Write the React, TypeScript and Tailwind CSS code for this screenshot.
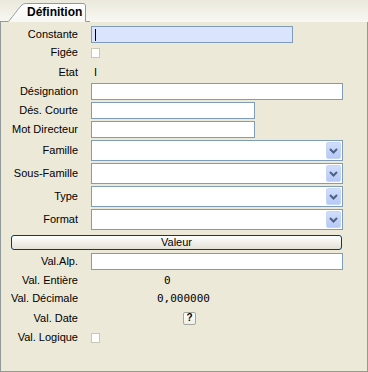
import React from "react"

const font = { fontFamily: '"Liberation Sans", Arial, sans-serif' }

function Label({ text }: { text: string }) {
  return <div className="w-[77px] shrink-0 text-right text-[11px] leading-none text-black">{text}</div>
}

function Row({ label, mt, h, children }: { label: string; mt: string; h: string; children?: React.ReactNode }) {
  return (
    <div className={`flex items-center ${mt} ${h}`}>
      <Label text={label} />
      <div className="ml-[13px] flex h-full items-center">{children}</div>
    </div>
  )
}

function TextBox({ w, focused, children }: { w: string; focused?: boolean; children?: React.ReactNode }) {
  return (
    <div
      className={`relative h-[17px] ${w} border border-[#7f9db9] ${focused ? "bg-[#dae4fc]" : "bg-white"}`}
    >
      {children}
    </div>
  )
}

function Combo() {
  return (
    <div className="flex h-[21px] w-[252px] items-stretch justify-end border border-[#7f9db9] bg-white p-[1px]">
      <div className="flex w-[15px] items-center justify-center rounded-[2px] border border-[#c7d5f7] bg-gradient-to-b from-[#d0defc] to-[#b6c9f7]">
        <svg width="9" height="6" viewBox="0 0 9 6">
          <polyline points="1,1 4.5,4.5 8,1" fill="none" stroke="#4d6185" strokeWidth="2" />
        </svg>
      </div>
    </div>
  )
}

function CheckBox() {
  return <div className="h-[10px] w-[9px] border border-[#c9c7ba] bg-white" />
}

export default function App() {
  return (
    <div className="h-[372px] w-[368px] bg-[#ece9d8]" style={font}>
      {/* bandeau des onglets */}
      <div className="relative z-10 -mb-px h-[22px] bg-gradient-to-b from-[#ebe9dc] to-[#f8f7f2]">
        <div className="relative h-[22px] w-[90px]">
          <svg className="absolute left-0 top-0" width="90" height="22" viewBox="0 0 90 22">
            <defs>
              <linearGradient id="tabg" x1="0" y1="0" x2="0" y2="1">
                <stop offset="0" stopColor="#ffffff" />
                <stop offset="1" stopColor="#f7f7f5" />
              </linearGradient>
            </defs>
            <path d="M8 22 L8.5 21.5 C14 15 18 9 21 6 C22.5 4.3 24 3.5 26.5 3.5 L83 3.5 C84.8 3.5 85.5 4.5 85.5 6 L85.5 22 Z" fill="url(#tabg)" />
            <path d="M0 21.5 L8.5 21.5 C14 15 18 9 21 6 C22.5 4.3 24 3.5 26.5 3.5 L83 3.5 C84.8 3.5 85.5 4.5 85.5 6 L85.5 21.5 L90 21.5" fill="none" stroke="#919b9c" />
          </svg>
          <span className="absolute left-[27px] top-[5px] text-[12px] font-bold leading-[14px] text-black">Définition</span>
        </div>
      </div>

      {/* panneau */}
      <div className="h-[351px] w-[368px] border border-[#919b9c] bg-[#ece9d8]">
        <div className="flex flex-col">
          <Row label="Constante" mt="mt-[4px]" h="h-[17px]">
            <TextBox w="w-[202px]" focused>
              <div className="absolute left-[3px] top-[2px] h-[12px] w-[1px] bg-black" />
            </TextBox>
          </Row>
          <Row label="Figée" mt="mt-[1px]" h="h-[17px]">
            <CheckBox />
          </Row>
          <Row label="Etat" mt="mt-[3px]" h="h-[17px]">
            <span className="ml-[3px] text-[11px] leading-none">I</span>
          </Row>
          <Row label="Désignation" mt="mt-[2px]" h="h-[17px]">
            <TextBox w="w-[252px]" />
          </Row>
          <Row label="Dés. Courte" mt="mt-[2px]" h="h-[17px]">
            <TextBox w="w-[164px]" />
          </Row>
          <Row label="Mot Directeur" mt="mt-[2px]" h="h-[17px]">
            <TextBox w="w-[164px]" />
          </Row>
          <Row label="Famille" mt="mt-[2px]" h="h-[21px]">
            <Combo />
          </Row>
          <Row label="Sous-Famille" mt="mt-[2px]" h="h-[21px]">
            <Combo />
          </Row>
          <Row label="Type" mt="mt-[2px]" h="h-[21px]">
            <Combo />
          </Row>
          <Row label="Format" mt="mt-[2px]" h="h-[21px]">
            <Combo />
          </Row>

          <button className="ml-[10px] mt-[5px] flex h-[15px] w-[331px] items-center justify-center rounded-[3px] border border-[#003c74] bg-gradient-to-b from-[#ffffff] to-[#e3e1d6] text-[11px] leading-none text-black">
            Valeur
          </button>

          <Row label="Val.Alp." mt="mt-[3px]" h="h-[17px]">
            <TextBox w="w-[252px]" />
          </Row>
          <Row label="Val. Entière" mt="mt-[2px]" h="h-[17px]">
            <span className="ml-[73px] text-[11px] leading-none" style={{ fontFamily: '"DejaVu Sans Mono", monospace' }}>
              0
            </span>
          </Row>
          <Row label="Val. Décimale" mt="mt-[1px]" h="h-[17px]">
            <span className="ml-[66px] text-[11px] leading-none" style={{ fontFamily: '"DejaVu Sans Mono", monospace' }}>
              0,000000
            </span>
          </Row>
          <Row label="Val. Date" mt="mt-[3px]" h="h-[16px]">
            <div className="ml-[92px] flex h-[13px] w-[13px] items-center justify-center rounded-[2px] border border-[#a7a69c] bg-gradient-to-b from-white to-[#f0efe8] text-[10px] font-bold leading-none">
              ?
            </div>
          </Row>
          <Row label="Val. Logique" mt="mt-[3px]" h="h-[17px]">
            <CheckBox />
          </Row>
        </div>
      </div>
    </div>
  )
}
